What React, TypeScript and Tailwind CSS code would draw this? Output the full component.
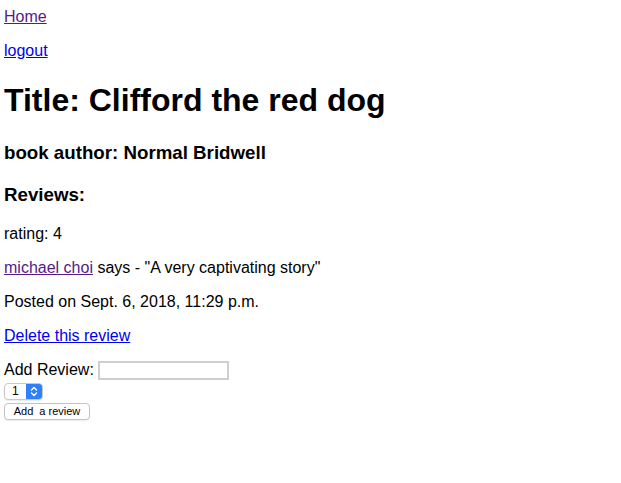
export default function App() {
  return (
    <div className="min-h-[483px] bg-white pl-1 pt-[8px] font-['Liberation_Sans',Arial,sans-serif] text-black">
      <p className="text-[16px] leading-[18px]">
        <a href="#" className="text-[#551a8b] underline">Home</a>
      </p>
      <p className="mt-4 text-[16px] leading-[18px]">
        <a href="#" className="text-[#0000ee] underline">logout</a>
      </p>

      <h1 className="mt-[22px] text-[32px] font-bold leading-[37px]">Title: Clifford the red dog</h1>
      <h3 className="mt-[22.5px] text-[18.72px] font-bold leading-[22px]">book author: Normal Bridwell</h3>
      <h3 className="mt-5 text-[18.72px] font-bold leading-[22px]">Reviews:</h3>

      <p className="mt-[19px] text-[16px] leading-[18px]">rating: 4</p>
      <p className="mt-4 text-[16px] leading-[18px]">
        <a href="#" className="text-[#551a8b] underline">michael choi</a> says - "A very captivating story"
      </p>
      <p className="mt-4 text-[16px] leading-[18px]">Posted on Sept. 6, 2018, 11:29 p.m.</p>
      <p className="mt-4 text-[16px] leading-[18px]">
        <a href="#" className="text-[#0000ee] underline">Delete this review</a>
      </p>

      <form className="mt-4 flex flex-col items-start" onSubmit={(e) => e.preventDefault()}>
        <div className="flex items-center text-[16px] leading-[18px]">
          <label>Add Review:</label>
          <input
            type="text"
            className="ml-[4px] h-[19px] w-[131px] border-2 border-[#cfcfcf] bg-white outline-none"
          />
        </div>

        {/* rating picker */}
        <div className="mt-[3px] flex h-[17px] w-[39px] overflow-hidden rounded-[4px] border border-[#c8c8c8] bg-white shadow-[0_1px_1px_rgba(0,0,0,0.08)]">
          <span className="flex-1 pl-[7px] text-[12px] leading-[15px]">1</span>
          <span className="flex w-[16px] items-center justify-center bg-[#2f7ff6]">
            <svg width="8" height="11" viewBox="0 0 8 11" fill="none" stroke="white" strokeWidth="1.4" strokeLinecap="round" strokeLinejoin="round">
              <path d="M1.5 4L4 1.5L6.5 4" />
              <path d="M1.5 7L4 9.5L6.5 7" />
            </svg>
          </span>
        </div>

        <button
          type="submit"
          className="mt-[3px] h-[17px] w-[86px] whitespace-pre rounded-[4px] border border-[#c4c4c4] bg-white text-center text-[11px] leading-[15px] shadow-[0_1px_1px_rgba(0,0,0,0.08)]"
        >
          {'Add  a review'}
        </button>
      </form>
    </div>
  );
}
